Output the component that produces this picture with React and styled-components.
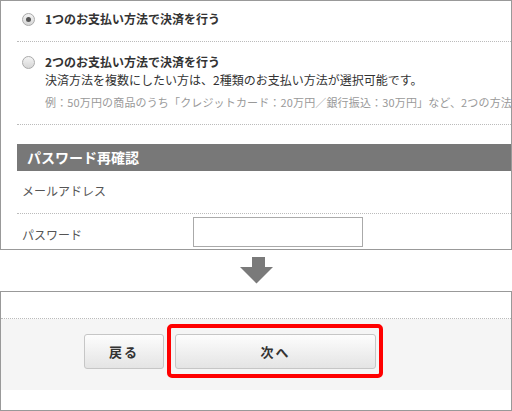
import React from "react";
import styled, { createGlobalStyle } from "styled-components";

const GlobalStyle = createGlobalStyle`
  body {
    margin: 0;
    background: #fff;
    font-family: "Noto Sans CJK JP", "Noto Sans", sans-serif;
    color: #333;
  }
`;

const Page = styled.div`
  width: 512px;
  height: 411px;
  display: flex;
  flex-direction: column;
  overflow: hidden;
`;

const TopPanel = styled.section`
  box-sizing: border-box;
  height: 250px;
  border: 1px solid #999;
  padding-left: 16px;
  overflow: hidden;
`;

const OptionRow = styled.div`
  display: flex;
  align-items: flex-start;
  gap: 10px;
  padding: ${(p) => p.$pad};
  padding-left: 5px;
  border-bottom: 1px dotted #bbb;
`;

const Radio = styled.span`
  flex: none;
  box-sizing: border-box;
  width: 13px;
  height: 13px;
  margin-top: 3px;
  border-radius: 50%;
  border: 1px solid #aaa;
  background: linear-gradient(#f4f4f4, #d6d6d6);
  display: flex;
  align-items: center;
  justify-content: center;
  &::after {
    content: "";
    display: ${(p) => (p.$checked ? "block" : "none")};
    width: 5px;
    height: 5px;
    border-radius: 50%;
    background: #555;
  }
`;

const OptionText = styled.div`
  display: flex;
  flex-direction: column;
  white-space: nowrap;
`;

const OptionTitle = styled.div`
  font-size: 12px;
  line-height: 18px;
  font-weight: bold;
  color: #333;
`;

const OptionNote = styled.div`
  font-size: 12px;
  line-height: 18px;
  color: #333;
`;

const OptionExample = styled.div`
  margin-top: 4px;
  font-size: 11px;
  line-height: 18px;
  letter-spacing: 0.15px;
  color: #999;
`;

const SectionHeader = styled.h2`
  margin: 19px 0 0;
  height: 27px;
  padding-left: 10px;
  background: #787878;
  color: #fff;
  font-size: 14px;
  font-weight: bold;
  line-height: 27px;
`;

const FormRow = styled.div`
  display: flex;
  align-items: flex-start;
  padding: ${(p) => p.$pad};
  border-bottom: ${(p) => (p.$last ? "none" : "1px dotted #bbb")};
`;

const Label = styled.div`
  width: 171px;
  padding-left: 5px;
  font-size: 12px;
  line-height: 18px;
  color: #555;
`;

const TextInput = styled.div`
  box-sizing: border-box;
  width: 170px;
  height: 30px;
  margin-top: -9px;
  border: 1px solid #aaa;
  background: #fff;
`;

const ArrowArea = styled.div`
  height: 41px;
  display: flex;
  justify-content: center;
  padding-top: 7px;
  box-sizing: border-box;
`;

const BottomPanel = styled.section`
  box-sizing: border-box;
  height: 120px;
  border: 1px solid #999;
  display: flex;
  flex-direction: column;
`;

const Spacer = styled.div`
  height: 26px;
  border-bottom: 1px dotted #bbb;
`;

const ButtonBar = styled.div`
  height: 71px;
  box-sizing: border-box;
  background: #f5f5f5;
  display: flex;
  align-items: flex-start;
  gap: 3px;
  padding: 5px 0 0 83px;
`;

const Button = styled.button`
  box-sizing: border-box;
  width: ${(p) => p.$width}px;
  height: 35px;
  margin-top: ${(p) => p.$top || 0}px;
  border: 1px solid #c6c6c6;
  border-radius: 3px;
  background: linear-gradient(#fdfdfd, #e4e4e4);
  font-family: inherit;
  font-size: 13px;
  font-weight: bold;
  color: #333;
  letter-spacing: 2px;
  padding: 0;
`;

const Highlight = styled.div`
  box-sizing: border-box;
  height: 54px;
  border: 4px solid #ff0000;
  border-radius: 5px;
  padding: 6px 3px 5px 4px;
`;

const DownArrow = () => (
  <svg width="33" height="27" viewBox="0 0 33 27">
    <path d="M12 0h13v10h8L16.5 26.5 0 10h12z" fill="#7a7a7a" />
  </svg>
);

const App = () => {
  return (
    <Page>
      <GlobalStyle />
      <TopPanel>
        <OptionRow $pad="9px 0 13px">
          <Radio $checked />
          <OptionText>
            <OptionTitle>1つのお支払い方法で決済を行う</OptionTitle>
          </OptionText>
        </OptionRow>
        <OptionRow $pad="11px 0 13px">
          <Radio />
          <OptionText>
            <OptionTitle>2つのお支払い方法で決済を行う</OptionTitle>
            <OptionNote>
              決済方法を複数にしたい方は、2種類のお支払い方法が選択可能です。
            </OptionNote>
            <OptionExample>
              例：50万円の商品のうち「クレジットカード：20万円／銀行振込：30万円」など、2つの方法
            </OptionExample>
          </OptionText>
        </OptionRow>
        <SectionHeader>パスワード再確認</SectionHeader>
        <FormRow $pad="11px 0 13px">
          <Label>メールアドレス</Label>
        </FormRow>
        <FormRow $pad="12px 0 0" $last>
          <Label>パスワード</Label>
          <TextInput />
        </FormRow>
      </TopPanel>
      <ArrowArea>
        <DownArrow />
      </ArrowArea>
      <BottomPanel>
        <Spacer />
        <ButtonBar>
          <Button $width={80} $top={10}>
            戻る
          </Button>
          <Highlight>
            <Button $width={201}>次へ</Button>
          </Highlight>
        </ButtonBar>
      </BottomPanel>
    </Page>
  );
};

export default App;
